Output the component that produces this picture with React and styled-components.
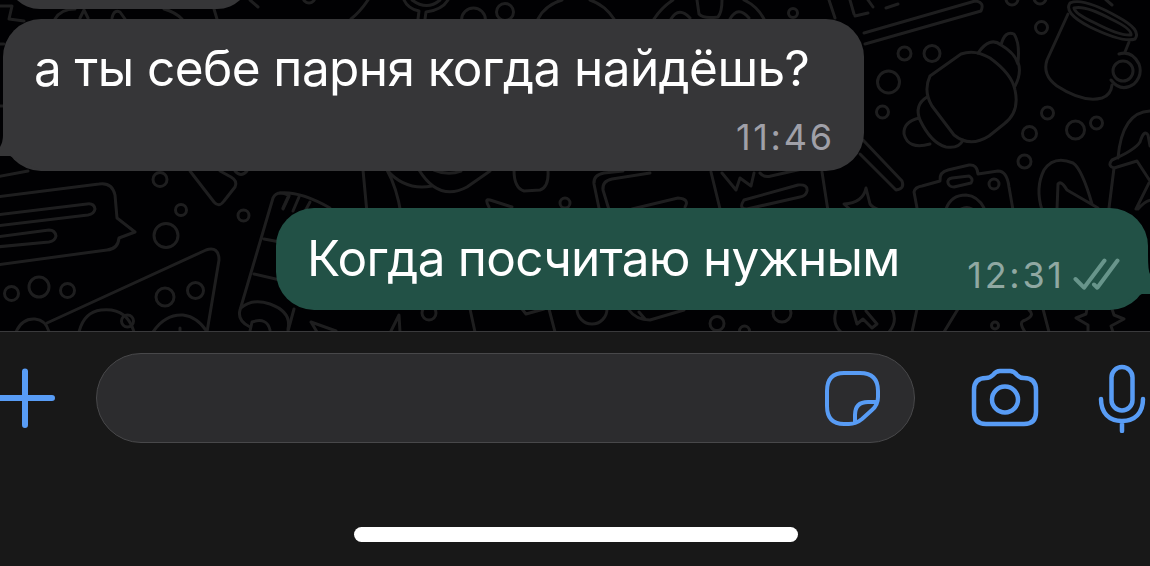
import React from "react";
import styled, { createGlobalStyle } from "styled-components";

const GlobalStyle = createGlobalStyle`
  * { box-sizing: border-box; }
  body { margin: 0; background: #181818; overflow: hidden; }
`;

const Screen = styled.div`
  width: 1150px;
  height: 566px;
  display: flex;
  flex-direction: column;
  overflow: hidden;
  background: #181818;
  font-family: Inter, "Liberation Sans", sans-serif;
`;

const Chat = styled.main`
  position: relative;
  height: 331px;
  flex: none;
  display: flex;
  flex-direction: column;
  overflow: hidden;
  background: #010103;
`;

const Wallpaper = styled.svg`
  position: absolute;
  inset: 0;
  width: 1150px;
  height: 331px;
  fill: none;
  stroke: #1e1e1f;
  stroke-width: 3;
  stroke-linecap: round;
  stroke-linejoin: round;
`;

const PreviousBubble = styled.div`
  position: relative;
  flex: none;
  width: 245px;
  height: 9px;
  margin-left: 6px;
  overflow: hidden;
  &::before {
    content: "";
    display: block;
    height: 90px;
    margin-top: -81px;
    border-radius: 34px;
    background: #363638;
  }
`;

const Bubble = styled.article`
  position: relative;
  flex: none;
  display: flex;
  width: ${(p) => p.$width}px;
  height: ${(p) => p.$height}px;
  border-radius: 38px;
  color: #fff;
  background: ${(p) => (p.$mine ? "#225146" : "#363638")};
`;

const Incoming = styled(Bubble)`
  flex-direction: column;
  margin: 10px 0 0 3px;
  padding: 20px 31px 0;
`;

const Outgoing = styled(Bubble)`
  align-items: flex-start;
  margin: 37px 0 0 276px;
  padding: 21px 28px 0 31px;
`;

const Tail = styled.svg`
  position: absolute;
  width: 40px;
  height: 60px;
  fill: ${(p) => p.$color};
  top: ${(p) => p.$top}px;
  ${(p) => (p.$side === "left" ? "left: -3px;" : "right: -2px;")}
`;

const Message = styled.div`
  flex: none;
  font-size: 49.5px;
  line-height: 58px;
  letter-spacing: ${(p) => p.$spacing}px;
  white-space: nowrap;
`;

const Time = styled.time`
  font-size: 36px;
  line-height: 44px;
  font-kerning: none;
  letter-spacing: ${(p) => p.$spacing}px;
  margin-right: ${(p) => 1 - p.$spacing}px;
  white-space: nowrap;
  color: ${(p) => p.$color};
`;

const IncomingTime = styled(Time)`
  align-self: flex-end;
  margin-top: 18px;
`;

const Status = styled.div`
  display: flex;
  align-items: flex-start;
  gap: 10px;
  margin: 24px 0 0 auto;
`;

const Checks = styled.svg`
  width: 47px;
  height: 33px;
  margin-top: 5px;
  fill: none;
  stroke: #68958b;
  stroke-width: 4;
  stroke-linecap: round;
  stroke-linejoin: round;
`;

const Footer = styled.footer`
  flex: 1;
  display: flex;
  flex-direction: column;
  align-items: center;
  border-top: 1px solid #3a3a3c;
  background: #181818;
`;

const Composer = styled.div`
  width: 1150px;
  display: flex;
  align-items: center;
  padding-top: 21px;
`;

const Field = styled.div`
  display: flex;
  align-items: center;
  justify-content: flex-end;
  width: 819px;
  height: 90px;
  margin-left: 40px;
  padding-right: 34px;
  border: 1px solid #48484a;
  border-radius: 45px;
  background: #2c2c2e;
`;

const Icon = styled.svg`
  display: block;
  flex: none;
  width: ${(p) => p.$w}px;
  height: ${(p) => p.$h}px;
  margin-left: ${(p) => p.$gap || 0}px;
  fill: none;
  stroke: #589cf5;
  stroke-width: ${(p) => p.$stroke || 4.5};
  stroke-linecap: round;
  stroke-linejoin: round;
`;

const HomeIndicator = styled.div`
  width: 444px;
  height: 15px;
  margin: 84px 0 0 2px;
  border-radius: 8px;
  background: #fff;
`;

const BUBBLES = [
  [160, 179.5, 7], [181, 210, 5.5], [243.5, 215.5, 5.5], [166, 235.5, 12],
  [11.5, 293.5, 7], [39, 287, 10], [67.5, 290.5, 7], [165, 297, 9], [195.5, 290.5, 8],
  [127.5, 321, 6], [429, 313, 7], [565, 203, 5], [793, 13, 4.5],
  [904.5, 53.5, 6.5], [932, 53.5, 8], [888.5, 82, 11], [882.5, 112, 6],
  [1041.5, 27.5, 6], [1012, -1, 6], [1040, -2, 6], [1047.5, 113, 6],
  [1029.5, 133.5, 7], [1075.5, 130, 9], [1096.5, 123, 6], [1024.5, 161.5, 6.5],
  [994, 184, 5], [717, 323.5, 7], [744.5, 331, 5], [782, 313, 9], [592, 309, 15],
  [995, 325.5, 3.5], [309, -3, 6], [473.5, 20, 12], [505, 12, 8.5],
];

const DOODLES = [
  // speech balloon with two lines
  "M-4 197 L99 184 Q112 182 115 195 L117 218 L135 232 L119 238 Q118 249 107 250 L-4 265",
  "M-4 215 L87 204 Q94 203 95 209 Q94 214 88 215 L-4 226 M-4 237 L49 230 Q55 230 56 236 Q55 241 49 242 L-4 247",
  "M-4 177 L28 171",
  // pizza slice
  "M47 323 L206 250 Q219 246 219 260 L207 332 M16 332 Q22 318 35 319 Q46 320 49 332",
  "M79 332 Q84 312 101 310 Q127 307 134 332 M153 332 Q165 314 183 315 Q198 317 207 332 M180 328 V333",
  // pencil and rocket fragments
  "M190 171 L214 202 Q219 208 224 201 L235 187 Q238 181 231 177 L220 171 M235 171 Q241 178 247 171",
  "M288 195 Q277 190 273 198 L240 310 Q237 321 250 327 M283 208 L289 195 M264 239 L280 242 M254 274 L280 280",
  "M241 308 Q252 298 270 304 Q292 312 288 329 M250 331 L252 322 Q267 317 270 330",
  "M280 193 Q300 191 330 208 M289 196 L283 209 M299 197 L293 211 M310 202 L304 213",
  "M363 170 L367 213 M387 170 Q397 188 401 214 M387 170 Q405 191 432 186 M419 170 Q439 202 467 187 L490 171 M434 170 Q448 176 461 171",
  "M514 170 Q514 188 524 191 L540 190 Q549 187 548 171 M512 207 L490 200 Q484 198 489 207",
  // notebook and sheet of paper
  "M600 213 L594 184 Q593 175 604 173 L623 171 M610 213 L603 190 Q602 181 612 179 L650 173 M632 209 L678 198 Q690 199 685 207",
  "M711 172 L721 213 M722 173 L736 190 L740 178 L751 186 L754 173 M760 173 Q764 178 771 176 L802 169",
  "M744 200 L798 185 Q808 184 807 191 Q806 196 800 197 L747 209 Q738 209 744 200 M822 172 L828 211",
  // stars and sparkles
  "M844 204 Q863 203 866 188 L870 204 Q873 208 880 210 M844 204 L853 212",
  // telescope and striped bar
  "M864 33 L975 1 Q985 2 981 11 L865 44 M850 0 L854 14 M868 0 L873 7 M855 16 L868 13 M886 8 L898 4 M829 0 L835 18",
  "M863 140 L902 181 Q905 189 896 190 L860 154",
  // croissant
  "M930 76 L961 54 Q975 49 990 58 Q1012 74 1015 90 Q1020 112 1004 124 L989 136 Q970 148 954 135 L932 106 Q923 91 930 76",
  "M978 53 Q990 36 1001 45 Q1005 30 1014 34 Q1020 43 1018 62 Q1022 73 1015 86 M1001 45 Q1015 53 1018 64",
  "M927 97 Q914 105 920 120 Q931 143 946 147 Q959 149 963 140 M919 118 Q903 122 904 134 Q908 150 930 144",
  // mug
  "M1068 14 L1047 60 Q1042 75 1057 86 Q1083 103 1102 98 Q1111 95 1112 85 M1129 42 L1125 52",
  "M1070 3 Q1083 -3 1118 17 Q1142 30 1135 39 Q1123 43 1090 27 Q1063 13 1070 3 M1074 8 Q1085 5 1111 19 Q1132 29 1131 35 Q1120 36 1095 23 Q1075 14 1074 8",
  "M1119 54 Q1132 50 1139 64 Q1143 75 1134 84 Q1121 93 1111 80 M1104 -2 L1112 5",
  // camera
  "M917 208 L914 192 Q915 187 922 186 L940 181 Q939 172 948 170 L969 165 Q977 164 978 174 L998 171 Q1007 171 1009 187 L1013 210",
  "M948 183 Q947 179 952 178 L969 176 Q974 179 971 183 L954 187 Q949 187 948 183 M946 209 Q951 195 966 195 Q978 196 984 208 M961 209 Q967 206 972 209",
  // sandals
  "M1042 210 Q1035 188 1044 170 Q1054 155 1073 163 Q1082 169 1092 204 M1057 209 L1058 184 Q1061 180 1067 190 L1098 208",
  "M1118 158 Q1122 112 1150 111 M1150 146 L1148 135 Q1144 129 1140 142 Q1135 150 1112 160 Q1107 166 1114 168 L1137 161 L1150 181 M1114 168 L1109 208 M1149 183 L1136 209 M1138 209 Q1145 201 1151 200",
  // strip below the last message
  "M288 331 L294 309 M311 322 L336 331 M311 322 L317 332 M391 331 L399 315 L400 332 M470 309 L475 332 M522 309 L526 314 L544 309 M549 309 L555 332",
  "M629 310 Q636 320 650 320 L684 310 M639 312 L645 319 M836 311 Q832 324 841 332 M853 310 L857 324 L863 319 L872 328 L877 324 L866 311",
  "M892 309 Q898 321 889 332 M917 309 L912 332 M958 309 L944 332 M1029 310 Q1036 316 1023 321 Q1019 323 1025 332 M1043 309 L1049 332",
  "M1087 309 L1086 314 L1076 318 L1088 325 L1088 332 M1112 309 L1114 315 L1124 319 L1111 326 L1113 332",
  // strip above the first message
  "M0 6 L12 6 L9 19 L24 21 M55 19 Q61 9 75 9 M80 18 L84 10 L88 18 M112 18 Q114 9 120 12 L125 19 M164 9 Q175 12 182 19 M214 9 L217 19 M250 0 L258 7",
  "M368 0 Q360 12 351 19 M404 0 Q408 9 419 11 L418 19 M448 0 Q442 10 426 12 L425 19 M412 0 Q427 11 440 0 M538 19 Q545 5 562 0",
  "M590 0 Q605 5 614 19 M654 19 Q662 7 673 0 M671 19 Q679 6 690 18 M697 0 L699 14 Q703 19 718 17 Q722 12 722 0 M730 19 Q738 5 749 18 M744 0 Q757 6 764 19",
  "M0 44 H4 M0 106 H4",
];

function DoodleWallpaper() {
  return (
    <Wallpaper viewBox="0 0 1150 331" aria-hidden="true">
      {DOODLES.map((d) => <path key={d} d={d} />)}
      {BUBBLES.map(([x, y, r]) => <circle key={`${x}-${y}`} cx={x} cy={y} r={r} />)}
      <circle cx="1123" cy="71" r="10" />
    </Wallpaper>
  );
}

export default function App() {
  return (
    <>
      <GlobalStyle />
      <Screen>
        <Chat>
          <DoodleWallpaper />
          <PreviousBubble />
          <Incoming $width={861} $height={152}>
            <Tail $side="left" $top={97} $color="#363638" viewBox="0 0 40 60">
              <path d="M3 0 V19 Q3 26 0 31 V40 H10 L40 54 V0 Z" />
            </Tail>
            <Message $spacing={-0.58}>а ты себе парня когда найдёшь?</Message>
            <IncomingTime dateTime="11:46" $color="#a0a0a8" $spacing={2.7}>11:46</IncomingTime>
          </Incoming>
          <Outgoing $mine $width={872} $height={102}>
            <Tail $side="right" $top={38} $color="#225146" viewBox="0 0 40 60">
              <path d="M38 0 V8 Q38 25 40 28 V48 H32 L18 54 V0 Z" />
            </Tail>
            <Message $spacing={-0.75}>Когда посчитаю нужным</Message>
            <Status>
              <Time dateTime="12:31" $color="#90a8a2" $spacing={2.7}>12:31</Time>
              <Checks viewBox="0 0 47 33">
                <path d="M2.5 21 L11 29.7 L31.5 2.5 M21 26.5 L24.3 29.7 L44.5 2.5" />
              </Checks>
            </Status>
          </Outgoing>
        </Chat>
        <Footer>
          <Composer>
            <Icon $w={56} $h={60} $stroke={6} viewBox="0 0 56 60" aria-label="Add">
              <path d="M-4 30 H52 M25 3.5 V57" />
            </Icon>
            <Field>
              <Icon $w={56} $h={56} $stroke={4} viewBox="0 0 56 56" aria-label="Stickers">
                <path d="M20 3 H36 Q54 3 54 21 V27 Q54 35 48 40 L38 49 Q32 54 25 54 H20 Q3 54 3 36 V21 Q3 3 20 3 Z M31 53 V45 Q31 32 44 32 H53" />
              </Icon>
            </Field>
            <Icon $w={68} $h={60} $gap={56} viewBox="0 0 68 60" aria-label="Camera">
              <path d="M3 22 Q3 10 15 10 Q19 10 22 7 Q25 3 29 3 H39 Q43 3 46 7 Q49 10 53 10 Q65 10 65 22 V44 Q65 56 53 56 H15 Q3 56 3 44 Z" />
              <circle cx="34" cy="31.5" r="13" />
            </Icon>
            <Icon $w={50} $h={70} $gap={58} viewBox="0 0 50 70" aria-label="Record">
              <rect x="14.5" y="4" width="21" height="43.5" rx="10.5" />
              <path d="M4 36 C4 50 12 58 25 58 S46 50 46 36 M25 58 V68" />
            </Icon>
          </Composer>
          <HomeIndicator />
        </Footer>
      </Screen>
    </>
  );
}
